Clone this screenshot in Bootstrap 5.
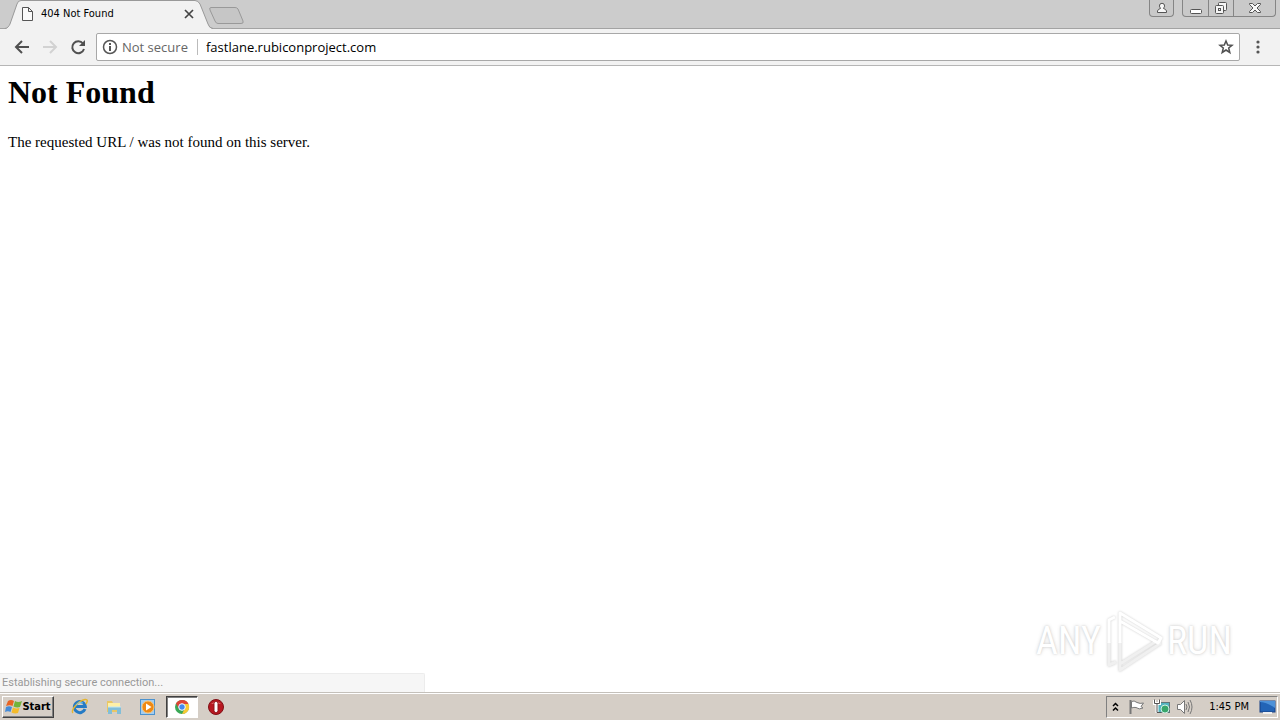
<!DOCTYPE html>
<html lang="en">
<head>
<meta charset="utf-8">
<meta name="viewport" content="width=device-width, initial-scale=1">
<title>404 Not Found</title>
<link rel="stylesheet" href="https://cdn.jsdelivr.net/npm/bootstrap@5.3.0/dist/css/bootstrap.min.css">
<style>
  body { font-family: "DejaVu Sans Condensed", "DejaVu Sans", sans-serif; font-size: 11px; line-height: 14px; color: #000; background: #fff; }
  button { border: 0; padding: 0; background: none; color: inherit; display: flex; align-items: center; justify-content: center; }
  svg { display: block; flex: none; overflow: visible; }
  .strip { height: 29px; background: #ccc; border-bottom: 1px solid #a3a3a3; }
  .tab-shape { width: 208px; height: 29px; margin-left: 5px; }
  .tab-shape > svg { position: absolute; left: 0; top: 0; }
  .tab-body { position: relative; height: 28px; padding: 0 19px 0 16px; }
  .win-group { height: 17px; border: 1px solid #858585; border-top: 0; border-radius: 0 0 4px 4px; background: #c9c9c9; }
  .win-group button { height: 16px; width: 25px; }
  .win-group .win-profile { width: 23px; }
  .win-group .win-close { width: 42px; }
  .win-group button + button { border-left: 1px solid #858585; }
  .toolbar { height: 37px; background: #f2f2f2; border-bottom: 1px solid #b6b6b6; padding: 0 8px; }
  .tool-btn { width: 28px; height: 28px; }
  .omni { height: 28px; background: #fff; border: 1px solid #a8a8a8; border-radius: 2px; padding: 0 5px; font-family: "Open Sans", sans-serif; font-size: 13px; line-height: 20px; }
  .omni .secure { color: #666; width: 67px; white-space: nowrap; }
  .omni .rule { width: 1px; height: 16px; background: #bbb; margin: 0 8px; }
  .omni input { border: 0; padding: 0; outline: 0; min-width: 0; color: #000; }
  .page { font-family: "Liberation Serif", serif; font-size: 15px; line-height: 18px; padding: 8px; }
  .page h1 { font-size: 32px; line-height: 37px; font-weight: 700; margin: 0 0 22px; }
  .status { position: absolute; left: 0; bottom: 0; width: 33.2%; height: 19px; background: #f6f6f6; border: 1px solid #ececec; border-width: 1px 1px 0 0; border-top-right-radius: 2px; color: #999; padding: 2px; font-family: Roboto, sans-serif; }
  .stamp { position: absolute; right: 48px; bottom: 18px; font-family: "Roboto Condensed", "Liberation Sans", sans-serif; font-size: 38px; line-height: 44px; color: #fff; text-shadow: 0 0 2px #ccc, 0 0 4px #ddd; }
  .stamp svg { filter: drop-shadow(0 0 1px #ccc); }
  .taskbar { height: 28px; background: #d5cec6; border-top: 1px solid #c4c0ba; box-shadow: inset 0 1px #fff; padding: 1px 2px 0; }
  .raised { height: 22px; width: 52px; border: 1px solid; border-color: #fff #404040 #404040 #fff; box-shadow: inset -1px -1px #808080; font-weight: 700; font-size: 11px; margin-right: 10px; }
  .launch { width: 32px; height: 22px; margin-right: 2px; }
  .pressed { background: #fff; border: 1px solid; border-color: #404040 #fff #fff #404040; box-shadow: inset 1px 1px #808080; }
  .tray { height: 22px; border: 1px solid; border-color: #808080 #fff #fff #808080; padding: 0 2px 0 5px; }
  .tray time { margin: 0 10px 0 14px; }
</style>
</head>
<body>
<div class="d-flex flex-column vh-100 overflow-hidden">
  <header>
    <div class="strip d-flex align-items-start">
      <div class="tab-shape position-relative">
        <svg width="208" height="29"><path d="M0 28.5C3 28 4 26 5 24L12 4Q13 .5 16 .5H190Q193 .5 195 4L203 24Q204 28 208 28.5" fill="#f2f2f2" stroke="#999"/><path d="M2 28.5H206" stroke="#f2f2f2"/></svg>
        <div class="tab-body d-flex align-items-center">
          <svg width="12" height="14" fill="none" stroke="#555"><path d="M1.500.5H7.500L11.500 4.500V13.500H1.500ZM7.500.5V4.500H11.500" fill="#fafafa"/></svg>
          <span class="ms-2 flex-grow-1">404 Not Found</span>
          <button type="button" aria-label="Close tab"><svg width="10" height="10" stroke="#444" stroke-width="1.700"><path d="M1 1L9 9M9 1L1 9"/></svg></button>
        </div>
      </div>
      <button type="button" aria-label="New tab" class="mt-1"><svg width="30" height="22"><path d="M-2 3.500H22Q24 3.500 25 5L30 17Q31 19.500 28 19.500H5Q3 19.500 2 17L-3 6Q-4 3.500 -2 3.500Z" fill="#c6c6c6" stroke="#999"/></svg></button>
      <div class="ms-auto d-flex pe-1">
        <div class="win-group me-1 d-flex"><button type="button" class="win-profile" aria-label="Profile"><svg width="12" height="12" fill="#f8f8f8" stroke="#555"><path d="M1.500 10.500V9Q2 7 4.500 6.500Q2.500 4 4 2Q6 .5 8 2Q9.500 4 7.500 6.500Q10 7 10.500 9V10.500Z"/></svg></button></div>
        <div class="win-group ms-1 d-flex">
          <button type="button" aria-label="Minimize"><svg width="14" height="14"><rect x="1.500" y="8.500" width="11" height="4" rx="1" fill="#fff" stroke="#555"/></svg></button>
          <button type="button" aria-label="Restore"><svg width="14" height="14" fill="#f5f5f5" stroke="#555"><rect x="4.500" y="1.500" width="8" height="8" rx="1"/><rect x="1.500" y="4.500" width="8" height="8" rx="1"/><rect x="4.500" y="7.500" width="2" height="2"/></svg></button>
          <button type="button" class="win-close" aria-label="Close"><svg width="14" height="12"><path d="M1.500 1.500H4.500L7 4L9.500 1.500H12.500V2.500L9 6L12.500 9.500V10.500H9.500L7 8L4.500 10.500H1.500V9.500L5 6L1.500 2.500Z" fill="#f8f8f8" stroke="#555"/></svg></button>
        </div>
      </div>
    </div>
    <nav class="toolbar d-flex align-items-center">
      <button type="button" class="tool-btn" aria-label="Back"><svg width="16" height="16" fill="none" stroke="#505050" stroke-width="2"><path d="M15 8H2M8 2L2 8L8 14"/></svg></button>
      <button type="button" class="tool-btn" aria-label="Forward"><svg width="16" height="16" fill="none" stroke="#d2d2d2" stroke-width="2"><path d="M1 8H14M8 2L14 8L8 14"/></svg></button>
      <button type="button" class="tool-btn" aria-label="Reload"><svg width="16" height="16" fill="none" stroke="#505050" stroke-width="2"><path d="M13 4.500A6 6 0 1 0 14 10"/><path d="M15 1V7H9Z" fill="#505050" stroke="none"/></svg></button>
      <div class="omni d-flex align-items-center flex-grow-1 ms-1">
        <svg width="16" height="16" fill="none" stroke="#555"><circle cx="8" cy="8" r="6.500" stroke-width="1.500"/><path d="M8 7V12M8 4V6" stroke-width="2"/></svg>
        <label class="secure ms-1" for="url">Not secure</label><span class="rule"></span>
        <input id="url" class="flex-grow-1" type="text" value="fastlane.rubiconproject.com">
        <button type="button" aria-label="Bookmark"><svg width="16" height="16" fill="none" stroke="#505050" stroke-width="1.500"><path d="M8 2L9.700 6L14 6.300L10.700 9L11.800 13.500L8 11L4.200 13.500L5.300 9L2 6.300L6.300 6Z"/></svg></button>
      </div>
      <button type="button" class="tool-btn ms-1" aria-label="Menu"><svg width="16" height="16" fill="#555"><circle cx="8" cy="3" r="1.600"/><circle cx="8" cy="8" r="1.600"/><circle cx="8" cy="13" r="1.600"/></svg></button>
    </nav>
  </header>

  <main class="position-relative flex-grow-1">
    <div class="page">
      <h1>Not Found</h1>
      <p class="mb-0">The requested URL / was not found on this server.</p>
    </div>
    <div class="status">Establishing secure connection...</div>
    <div class="stamp d-flex align-items-center gap-1">
      <span>ANY</span>
      <svg width="58" height="66" fill="none" stroke-linejoin="round" stroke-width="3">
        <path d="M56 35L15 62V34M15 56L50 34H56M4 34V57L11 54" stroke="#f0f0f0"/>
        <path d="M15 35V5L56 30L53 35L15 13M4 35V12L10 9" stroke="#fff"/>
      </svg>
      <span>RUN</span>
    </div>
  </main>

  <footer class="taskbar d-flex align-items-center">
    <button type="button" class="raised"><svg width="17" height="16"><path d="M3 2Q6 0 9 2L7.500 7Q5 5.500 1 7Z" fill="#e86424"/><path d="M10 2Q13 4 17 2L15 8Q12 9 8.500 7.500Z" fill="#72b33b"/><path d="M1 8Q4 6.500 7 8L5.500 13Q3 11.500 0 13Z" fill="#448bd8"/><path d="M8 8.500Q11 10 14.500 9L13 14Q10 15 6.500 13.500Z" fill="#f4bb2b"/></svg>Start</button>
    <button type="button" class="launch" aria-label="Internet Explorer"><svg width="18" height="18" fill="none"><path d="M14 11A5.500 5.500 0 1 1 14.300 8.500H5" stroke="#257bc5" stroke-width="3"/><path d="M2 15C-1 13 7 3 14 1.500Q18 1 15 6" stroke="#e5b52e" stroke-width="1.500"/><path d="M5 7Q8 3 12 5" stroke="#79c9ef"/></svg></button>
    <button type="button" class="launch" aria-label="Explorer"><svg width="18" height="18"><path d="M2 3H7L8 5H15V14H2Z" fill="#e9c765"/><path d="M3 5H15V9H3Z" fill="#fff0a6"/><path d="M3 9H16V16H12V12H7V16H3Z" fill="#82bed8"/><path d="M3 9H16" stroke="#c4e8f3"/></svg></button>
    <button type="button" class="launch" aria-label="Media Player"><svg width="18" height="18"><rect x="1.500" y="1.500" width="14" height="15" fill="#a4cdf0" stroke="#4b92ce"/><circle cx="9" cy="9" r="6" fill="#ee8915" stroke="#ffc36b"/><path d="M7 5.500L12.500 9L7 12.500Z" fill="#fff"/></svg></button>
    <button type="button" class="launch pressed" aria-label="Chrome"><svg width="16" height="16"><circle cx="8" cy="8" r="7" fill="#39a856"/><path d="M2 4.500A7 7 0 0 1 14.500 5H8L5 10Z" fill="#df4437"/><path d="M14.500 5A7 7 0 0 1 8 15L11 9V5Z" fill="#f8c934"/><circle cx="8" cy="8" r="3.300" fill="#4389ef" stroke="#fff"/></svg></button>
    <button type="button" class="launch" aria-label="Opera"><svg width="18" height="18"><circle cx="9" cy="9" r="7.500" fill="#b81720" stroke="#801015"/><path d="M4 6Q9 1 14 6" fill="#db6667"/><rect x="7" y="3.500" width="4" height="11" rx="1.800" fill="#fff" stroke="#8f151a"/></svg></button>
    <div class="tray d-flex align-items-center ms-auto">
      <button type="button" aria-label="Show hidden icons"><svg width="7" height="10" fill="none" stroke="#000" stroke-width="1.500"><path d="M1 4L3.500 1.500L6 4M1 8.500L3.500 6L6 8.500"/></svg></button>
      <svg class="ms-2" width="18" height="18"><path d="M3.500 2V16" stroke="#777" stroke-width="2"/><path d="M4.500 3.500Q7 2 10 4.500Q13 6 16.500 5L14 8.500L16 10Q12 12 9 9.500Q7 9 4.500 10Z" fill="#fff" stroke="#777"/></svg>
      <svg class="ms-2" width="18" height="18"><rect x="4.500" y="4.500" width="12" height="10" fill="#52b4bf" stroke="#607579"/><circle cx="12" cy="11" r="4" fill="#38a66b" stroke="#d2eee5"/><path d="M1.500 2V5.500H6.500V2M4 5V15" stroke="#fff" stroke-width="3" fill="none"/><path d="M1.500 1.500V5.500H6.500V1.500M4 5V14.500H8" stroke="#555" fill="none"/></svg>
      <svg class="ms-1" width="20" height="18" fill="none" stroke="#777"><path d="M2.500 6.500H5.500L9.500 2.500V15.500L5.500 11.500H2.500Z" fill="#fff"/><path d="M11 6Q13 9 11 12M13 4Q16 9 13 14M15 2Q19 9 15 16"/></svg>
      <time>1:45 PM</time>
      <button type="button" aria-label="Show desktop"><svg width="16" height="16"><rect x="1" y="2" width="15" height="11" fill="#2364b6" stroke="#173f83"/><path d="M1 3Q7 3 16 9V2H1Z" fill="#4d91d8"/><path d="M4 14H13" stroke="#eee" stroke-width="2"/></svg></button>
    </div>
  </footer>
</div>
<script src="https://cdn.jsdelivr.net/npm/bootstrap@5.3.0/dist/js/bootstrap.bundle.min.js"></script>
</body>
</html>
